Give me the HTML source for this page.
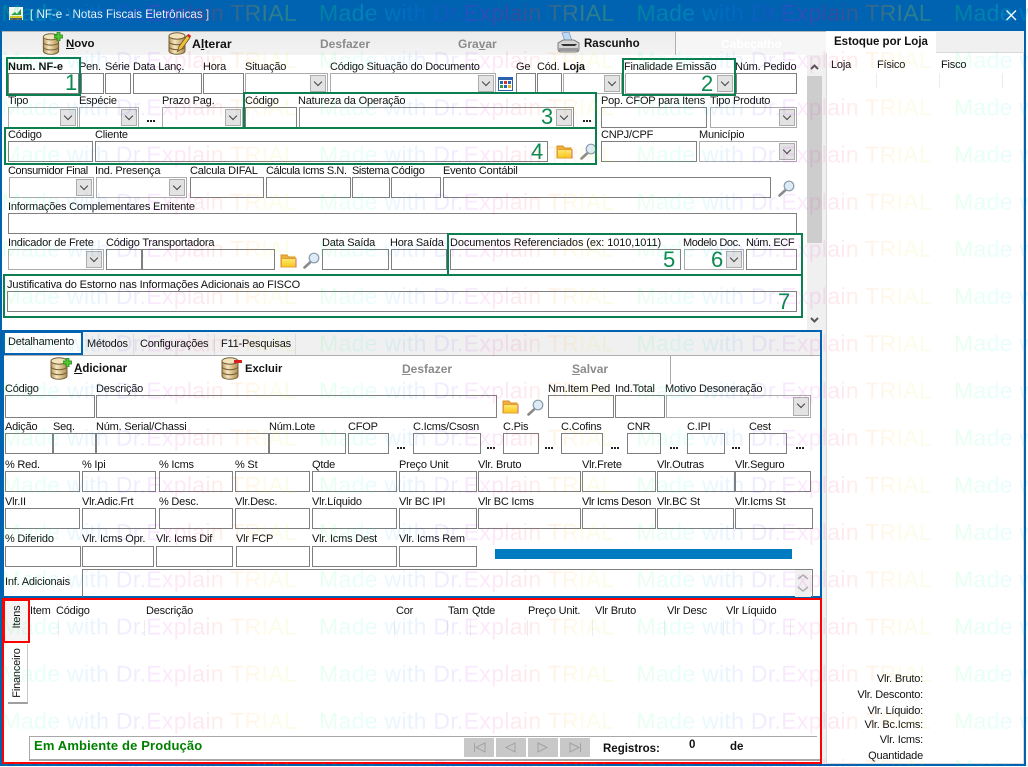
<!DOCTYPE html>
<html lang="pt"><head><meta charset="utf-8"><title>NF-e</title>
<style>
html,body{margin:0;padding:0;width:1028px;height:767px;overflow:hidden;background:#fff}
body{position:relative;font:11px/14px "Liberation Sans",Arial,sans-serif;color:#111;letter-spacing:-.2px}
div,span,b,svg{position:absolute}
.L span{white-space:nowrap;top:0}
.L{left:0;width:826px;height:14px;margin-top:1px}
.r{left:0;width:826px}
.r b{top:0;height:100%;box-sizing:border-box;border:1px solid #7f7f7f;background:transparent}
.r b.c{border-color:#ababab}
.r b.c i{position:absolute;right:1px;top:1px;bottom:1px;width:16px;box-sizing:border-box;background:#e3e3e3;border:1px solid #adadad}
.r b.c i:after{content:"";position:absolute;left:4px;top:3px;width:5px;height:5px;border-right:1px solid #444;border-bottom:1px solid #444;transform:rotate(45deg)}
.d{width:9px;height:2px;background:repeating-linear-gradient(90deg,#222 0 2px,transparent 2px 3px)}
.g{box-sizing:border-box;border:2px solid #0b7f4f}
.n{font-size:22px;line-height:24px;color:#0b8a50;letter-spacing:0}
.t{font-weight:bold;font-size:12px;line-height:16px;white-space:nowrap;color:#111;letter-spacing:0}
.t.o{color:#8b8b8b}
.h{white-space:nowrap;margin-top:1px}
.v{white-space:nowrap;transform:rotate(-90deg);transform-origin:center}
.tk{width:1px;background:#ececec}
.nb{top:738px;width:30px;height:19px;background:#c8c8c8}
.tot{left:780px;width:143px;text-align:right;white-space:nowrap;margin-top:1px}
.q{letter-spacing:-.4px}
</style></head><body>
<!-- window frame -->
<div style="left:0;top:0;width:1026px;height:766px;background:#0063b1"></div>
<div style="left:2px;top:31px;width:1022px;height:733px;background:#f0f0f0"></div>
<!-- toolbar -->
<div style="left:2px;top:32px;width:824px;height:23px;background:linear-gradient(#ececec,#f3f3f3)"></div>
<div style="left:2px;top:31px;width:824px;height:1px;background:#b5b5b5"></div>
<div style="left:675px;top:32px;width:151px;height:23px;background:#f6f6f6;border-left:1px solid #b0b0b0;box-sizing:border-box"></div>
<div class="t" style="left:721px;top:36px;color:#fff">Cabeçalho</div>
<!-- top form -->
<div style="left:2px;top:55px;width:805px;height:275px;background:#fff"></div>
<div style="left:807px;top:55px;width:15px;height:275px;background:#f0f0f0"></div>
<div style="left:807px;top:76px;width:15px;height:167px;background:#cdcdcd"></div>
<svg style="left:807px;top:62px" width="15" height="10"><path d="M4 7l3.500-3.500L11 7" fill="none" stroke="#555" stroke-width="2"/></svg>
<svg style="left:807px;top:315px" width="15" height="10"><path d="M4 3l3.500 3.500L11 3" fill="none" stroke="#555" stroke-width="2"/></svg>
<!-- right panel -->
<div style="left:826px;top:52px;width:198px;height:712px;background:#fff;border:1px solid #d9d9d9;box-sizing:border-box"></div>
<div style="left:826px;top:32px;width:110px;height:21px;background:#fff"></div>
<div class="t" style="left:834px;top:34px;font-size:11.5px">Estoque por Loja</div>
<div class="h" style="left:831px;top:57px">Loja</div><div class="h" style="left:877px;top:57px">Físico</div><div class="h" style="left:941px;top:57px">Fisco</div>
<div class="tk" style="left:876px;top:73px;height:15px"></div><div class="tk" style="left:939px;top:73px;height:15px"></div><div class="tk" style="left:1002px;top:73px;height:15px"></div>
<div class="tot" style="top:671px">Vlr. Bruto:</div><div class="tot" style="top:687px">Vlr. Desconto:</div><div class="tot" style="top:703px">Vlr. Líquido:</div><div class="tot" style="top:717px">Vlr. Bc.Icms:</div><div class="tot" style="top:732px">Vlr. Icms:</div><div class="tot" style="top:748px">Quantidade</div>
<!-- title -->
<svg style="left:9px;top:6px" width="15" height="15"><rect x="0" y="1" width="14" height="13" fill="#f4f4f4"/><path d="M2 9l4-3 2 2 4-5v6z" fill="#2f9a3a"/><path d="M1 10h12v2H1z" fill="#e8c020"/><path d="M1 12h12v2H1z" fill="#556"/></svg>
<div class="h" style="left:30px;top:7px;color:#f0f6fb;font-size:11.6px;letter-spacing:0">[ NF-e - Notas Fiscais Eletrônicas ]</div>
<svg style="left:1005px;top:9px" width="13" height="13"><path d="M1.500 1.500l9.500 9.500M11 1.500L1.500 11" stroke="#fff" stroke-width="1.300"/></svg>
<!-- svg defs -->
<svg width="0" height="0" style="left:0;top:0"><defs>
<linearGradient id="gd" x1="0" x2="1" y1="0" y2="0"><stop offset="0" stop-color="#b8965a"/><stop offset=".35" stop-color="#f6e8c0"/><stop offset="1" stop-color="#b08c4c"/></linearGradient>
<linearGradient id="fo" x1="0" x2="0" y1="0" y2="1"><stop offset="0" stop-color="#ffe873"/><stop offset="1" stop-color="#f8c81c"/></linearGradient>
<symbol id="db" viewBox="0 0 18 23"><path d="M1 4v15c0 1.800 3.500 3.300 8 3.300s8-1.500 8-3.300V4z" fill="url(#gd)" stroke="#75603a"/><ellipse cx="9" cy="4" rx="8" ry="3.200" fill="#f3e4bc" stroke="#75603a"/><path d="M1 9.500c0 1.800 3.500 3.200 8 3.200s8-1.400 8-3.200M1 14.500c0 1.800 3.500 3.200 8 3.200s8-1.400 8-3.200" fill="none" stroke="#75603a"/></symbol>
<symbol id="pl" viewBox="0 0 9 9"><path d="M3 0h3v3h3v3H6v3H3V6H0V3h3z" fill="#52c832" stroke="#1d7a14" stroke-width=".7"/></symbol>
<symbol id="fd" viewBox="0 0 17 15"><path d="M1 2h6l1.500 2H15v10H1z" fill="#f0b040" stroke="#d8902c"/><path d="M1.500 5.500H16V14H1.500z" fill="url(#fo)" stroke="#e0a030"/><path d="M16 6v8.500" stroke="#d040b0" stroke-width=".7"/></symbol>
<symbol id="sr" viewBox="0 0 17 17"><path d="M7 10.500L1.500 15.500" stroke="#8a8a8a" stroke-width="2.600" stroke-linecap="round"/><circle cx="11" cy="6" r="4.800" fill="#dcebf7" stroke="#8a9aa8" stroke-width="1.200"/></symbol>
</defs></svg>
<!-- toolbar items -->
<svg style="left:42px;top:33px" width="18" height="22"><use href="#db"/></svg><svg style="left:54px;top:32px" width="9" height="9"><use href="#pl"/></svg>
<div class="t" style="left:66px;top:36px;font-size:11.4px"><u>N</u>ovo</div>
<svg style="left:168px;top:32px" width="18" height="23"><use href="#db"/></svg>
<svg style="left:176px;top:32px" width="15" height="21"><path d="M1.500 19.500L3 14.500 11 3.500l3 2.200-8 11z" fill="#f0c040" stroke="#6b5320" stroke-width=".8"/><path d="M11 3.500l1.200-1.800 3 2.200-1.200 1.800z" fill="#e02020"/></svg>
<div class="t" style="left:192px;top:36px;font-size:12.3px">A<u>l</u>terar</div>
<div class="t o" style="left:320px;top:36px">Desfazer</div>
<div class="t o" style="left:458px;top:36px">Gra<u>v</u>ar</div>
<svg style="left:557px;top:32px" width="23" height="22"><path d="M5 1l7-1 3 9H8z" fill="#bcd8f4" stroke="#7a9ac0" stroke-width=".8"/><path d="M1 11l5-3h11l5 3v6c0 2-1 3-3 3H4c-2 0-3-1-3-3z" fill="#d4d4d4" stroke="#666" stroke-width=".8"/><path d="M6 14h12l2-2H4z" fill="#333"/><path d="M2 16h19v3H2z" fill="#9a9a9a"/></svg>
<div class="t" style="left:584px;top:36px;font-size:11.5px">Rascunho</div>

<!-- labels top form -->
<div class="L" style="top:59px"><span style="left:8px;font-weight:bold;letter-spacing:0">Num. NF-e</span><span style="left:79px">Pen.</span><span style="left:105px">Série</span><span style="left:133px">Data Lanç.</span><span style="left:203px">Hora</span><span style="left:245px">Situação</span><span style="left:330px">Código Situação do Documento</span><span style="left:516px">Ge</span><span style="left:537px">Cód.</span><span style="left:563px;font-weight:bold">Loja</span><span style="left:624px">Finalidade Emissão</span><span style="left:735px">Núm. Pedido</span></div>
<div class="r" style="top:73px;height:21px"><b style="left:8px;width:71px"></b><b style="left:81px;width:23px"></b><b style="left:105px;width:26px"></b><b style="left:133px;width:69px"></b><b style="left:203px;width:41px"></b><b class="c" style="left:245px;width:83px"><i></i></b><b class="c" style="left:330px;width:166px"><i></i></b><b style="left:516px;width:20px"></b><b style="left:537px;width:25px"></b><b class="c" style="left:563px;width:59px"><i></i></b><b class="c" style="left:625px;width:110px"><i></i></b><b style="left:736px;width:61px"></b></div>
<svg style="left:498px;top:77px" width="15" height="14"><rect x=".5" y=".5" width="14" height="13" fill="#fff" stroke="#2a62b0"/><rect x="1" y="1" width="13" height="2" fill="#2a62b0"/><rect x="2" y="4" width="3" height="3" fill="#2a62b0"/><rect x="6" y="4" width="3" height="3" fill="#d03030"/><rect x="10" y="4" width="3" height="3" fill="#2a62b0"/><rect x="2" y="8" width="3" height="3" fill="#30a040"/><rect x="6" y="8" width="3" height="3" fill="#2a62b0"/><rect x="10" y="8" width="3" height="3" fill="#e0b020"/></svg>

<div class="L" style="top:93px"><span style="left:8px">Tipo</span><span style="left:79px">Espécie</span><span style="left:162px">Prazo Pag.</span><span style="left:245px">Código</span><span style="left:298px">Natureza da Operação</span><span style="left:601px">Pop. CFOP para Itens</span><span style="left:710px">Tipo Produto</span></div>
<div class="r" style="top:107px;height:21px"><b class="c" style="left:8px;width:70px"><i></i></b><b class="c" style="left:79px;width:60px"><i></i></b><b class="c" style="left:162px;width:81px"><i></i></b><b style="left:245px;width:52px"></b><b class="c" style="left:299px;width:275px;border-color:#8f8f8f"><i></i></b><b style="left:601px;width:106px"></b><b class="c" style="left:710px;width:87px"><i></i></b></div>
<div class="d" style="left:147px;top:120px"></div><div class="d" style="left:583px;top:120px"></div>

<div class="L" style="top:127px"><span style="left:8px">Código</span><span style="left:95px">Cliente</span><span style="left:601px">CNPJ/CPF</span><span style="left:699px">Município</span></div>
<div class="r" style="top:141px;height:21px"><b style="left:8px;width:85px"></b><b style="left:95px;width:453px"></b><b style="left:601px;width:96px"></b><b class="c" style="left:699px;width:98px"><i></i></b></div>
<svg style="left:556px;top:144px" width="17" height="15"><use href="#fd"/></svg><svg style="left:580px;top:143px" width="17" height="17"><use href="#sr"/></svg>

<div class="L" style="top:163px"><span class="q" style="left:8px">Consumidor Final</span><span style="left:95px">Ind. Presença</span><span style="left:190px">Calcula DIFAL</span><span class="q" style="left:266px">Cálcula Icms S.N.</span><span class="q" style="left:352px">Sistema</span><span style="left:391px">Código</span><span style="left:443px">Evento Contábil</span></div>
<div class="r" style="top:177px;height:21px"><b class="c" style="left:9px;width:85px"><i></i></b><b class="c" style="left:96px;width:91px"><i></i></b><b style="left:190px;width:74px"></b><b style="left:266px;width:85px"></b><b style="left:352px;width:38px"></b><b style="left:391px;width:50px"></b><b style="left:443px;width:328px"></b></div>
<svg style="left:778px;top:180px" width="17" height="17"><use href="#sr"/></svg>

<div class="L" style="top:199px"><span style="left:8px">Informações Complementares Emitente</span></div>
<div class="r" style="top:213px;height:21px"><b style="left:8px;width:789px"></b></div>

<div class="L" style="top:235px"><span style="left:8px">Indicador de Frete</span><span style="left:106px">Código Transportadora</span><span style="left:322px">Data Saída</span><span style="left:390px">Hora Saída</span><span style="left:450px;letter-spacing:-.1px">Documentos Referenciados (ex: 1010,1011)</span><span class="q" style="left:683px">Modelo Doc.</span><span class="q" style="left:746px">Núm. ECF</span></div>
<div class="r" style="top:249px;height:21px"><b class="c" style="left:8px;width:96px"><i></i></b><b style="left:106px;width:36px"></b><b style="left:142px;width:133px"></b><b style="left:322px;width:67px"></b><b style="left:391px;width:56px"></b><b style="left:450px;width:231px"></b><b class="c" style="left:684px;width:60px"><i></i></b><b style="left:746px;width:51px"></b></div>
<svg style="left:280px;top:253px" width="17" height="15"><use href="#fd"/></svg><svg style="left:303px;top:252px" width="17" height="17"><use href="#sr"/></svg>

<div class="L" style="top:277px"><span style="left:7px;letter-spacing:-.15px">Justificativa do Estorno nas Informações Adicionais ao FISCO</span></div>
<div class="r" style="top:291px;height:21px"><b style="left:7px;width:790px"></b></div>

<!-- green callouts -->
<div class="g" style="left:6px;top:57px;width:75px;height:39px"></div>
<div class="g" style="left:622px;top:58px;width:114px;height:38px"></div>
<div class="g" style="left:243px;top:92px;width:354px;height:37px"></div>
<div class="g" style="left:4px;top:127px;width:593px;height:38px"></div>
<div class="g" style="left:447px;top:233px;width:356px;height:43px"></div>
<div class="g" style="left:3px;top:274px;width:800px;height:44px"></div>
<div class="n" style="left:65px;top:71px">1</div><div class="n" style="left:701px;top:72px">2</div><div class="n" style="left:541px;top:105px">3</div><div class="n" style="left:531px;top:140px">4</div><div class="n" style="left:663px;top:248px">5</div><div class="n" style="left:711px;top:248px">6</div><div class="n" style="left:778px;top:290px">7</div><div class="n" style="left:480px;top:394px">8</div>

<!-- detail section -->
<div style="left:2px;top:330px;width:820px;height:268px;background:#fff;box-sizing:border-box;border:2px solid #0063b1"></div>
<div style="left:4px;top:332px;width:816px;height:23px;background:#f0f0f0"></div>
<div style="left:4px;top:355px;width:816px;height:1px;background:#b0b0b0"></div>
<div style="left:82px;top:334px;width:52px;height:21px;box-sizing:border-box;border-right:1px solid #ddd"></div><div style="left:134px;top:334px;width:81px;height:21px;box-sizing:border-box;border-right:1px solid #ddd"></div><div style="left:215px;top:334px;width:81px;height:21px;box-sizing:border-box;border-right:1px solid #ddd"></div>
<div style="left:3px;top:331px;width:80px;height:24px;background:#fff;box-sizing:border-box;border:2px solid #0063b1"></div>
<div class="h" style="left:8px;top:334px">Detalhamento</div><div class="h" style="left:87px;top:336px">Métodos</div><div class="h" style="left:140px;top:336px">Configurações</div><div class="h" style="left:221px;top:336px">F11-Pesquisas</div>
<div style="left:670px;top:356px;width:1px;height:28px;background:#a8a8a8"></div>
<svg style="left:50px;top:357px" width="18" height="23"><use href="#db"/></svg><svg style="left:63px;top:358px" width="9" height="9"><use href="#pl"/></svg>
<div class="t" style="left:74px;top:361px;font-size:11.5px"><u>A</u>dicionar</div>
<svg style="left:221px;top:357px" width="18" height="23"><use href="#db"/></svg><div style="left:234px;top:360px;width:8px;height:3px;background:#d82020"></div>
<div class="t" style="left:245px;top:361px;font-size:11.2px">Excluir</div>
<div class="t o" style="left:402px;top:361px"><u>D</u>esfazer</div>
<div class="t o" style="left:572px;top:361px"><u>S</u>alvar</div>

<div class="L" style="top:381px"><span style="left:5px">Código</span><span style="left:96px">Descrição</span><span style="left:548px">Nm.Item Ped</span><span style="left:615px">Ind.Total</span><span style="left:665px">Motivo Desoneração</span></div>
<div class="r" style="top:395px;height:23px"><b style="left:5px;width:90px"></b><b style="left:96px;width:401px"></b><b style="left:548px;width:66px"></b><b style="left:615px;width:50px"></b><b class="c" style="left:666px;width:145px"><i></i></b></div>
<svg style="left:502px;top:399px" width="17" height="15"><use href="#fd"/></svg><svg style="left:527px;top:399px" width="17" height="17"><use href="#sr"/></svg>

<div class="L" style="top:419px"><span style="left:5px">Adição</span><span style="left:53px">Seq.</span><span style="left:96px">Núm. Serial/Chassi</span><span style="left:269px">Núm.Lote</span><span style="left:348px">CFOP</span><span style="left:413px">C.Icms/Csosn</span><span style="left:503px">C.Pis</span><span style="left:561px">C.Cofins</span><span style="left:627px">CNR</span><span style="left:687px">C.IPI</span><span style="left:749px">Cest</span></div>
<div class="r" style="top:433px;height:21px"><b style="left:5px;width:48px"></b><b style="left:53px;width:43px"></b><b style="left:96px;width:173px"></b><b style="left:269px;width:77px"></b><b style="left:348px;width:41px"></b><b style="left:413px;width:68px"></b><b style="left:503px;width:36px"></b><b style="left:561px;width:42px"></b><b style="left:627px;width:34px"></b><b style="left:687px;width:38px"></b><b style="left:749px;width:38px"></b></div>
<div class="d" style="left:397px;top:447px"></div><div class="d" style="left:487px;top:447px"></div><div class="d" style="left:545px;top:447px"></div><div class="d" style="left:611px;top:447px"></div><div class="d" style="left:670px;top:447px"></div><div class="d" style="left:732px;top:447px"></div><div class="d" style="left:796px;top:447px"></div>

<div class="L" style="top:457px"><span style="left:5px">% Red.</span><span style="left:82px">% Ipi</span><span style="left:159px">% Icms</span><span style="left:235px">% St</span><span style="left:312px">Qtde</span><span style="left:399px">Preço Unit</span><span style="left:478px">Vlr. Bruto</span><span style="left:582px">Vlr.Frete</span><span style="left:657px">Vlr.Outras</span><span style="left:735px">Vlr.Seguro</span></div>
<div class="r" style="top:471px;height:21px"><b style="left:5px;width:75px"></b><b style="left:82px;width:74px"></b><b style="left:159px;width:74px"></b><b style="left:235px;width:75px"></b><b style="left:312px;width:85px"></b><b style="left:399px;width:78px"></b><b style="left:478px;width:103px"></b><b style="left:582px;width:74px"></b><b style="left:657px;width:78px"></b><b style="left:735px;width:76px"></b></div>

<div class="L" style="top:494px"><span style="left:5px">Vlr.II</span><span style="left:82px">Vlr.Adic.Frt</span><span style="left:159px">% Desc.</span><span style="left:235px">Vlr.Desc.</span><span style="left:312px">Vlr.Líquido</span><span style="left:399px">Vlr BC IPI</span><span style="left:478px">Vlr BC Icms</span><span class="q" style="left:582px">Vlr Icms Deson</span><span style="left:657px">Vlr.BC St</span><span style="left:735px">Vlr.Icms St</span></div>
<div class="r" style="top:508px;height:21px"><b style="left:5px;width:75px"></b><b style="left:82px;width:74px"></b><b style="left:159px;width:74px"></b><b style="left:235px;width:75px"></b><b style="left:312px;width:85px"></b><b style="left:399px;width:78px"></b><b style="left:478px;width:103px"></b><b style="left:582px;width:74px"></b><b style="left:657px;width:77px"></b><b style="left:735px;width:78px"></b></div>

<div class="L" style="top:531px"><span style="left:5px">% Diferido</span><span style="left:82px">Vlr. Icms Opr.</span><span style="left:156px">Vlr. Icms Dif</span><span style="left:236px">Vlr FCP</span><span style="left:312px">Vlr. Icms Dest</span><span style="left:399px">Vlr. Icms Rem</span></div>
<div class="r" style="top:546px;height:21px"><b style="left:5px;width:76px"></b><b style="left:82px;width:72px"></b><b style="left:156px;width:77px"></b><b style="left:236px;width:74px"></b><b style="left:312px;width:85px"></b><b style="left:399px;width:78px"></b></div>
<div style="left:495px;top:549px;width:297px;height:10px;background:#007ac0"></div>
<div class="h" style="left:5px;top:574px">Inf. Adicionais</div>
<div class="r" style="top:569px;height:28px"><b style="left:82px;width:731px;border-bottom:0"></b></div>
<div style="left:795px;top:570px;width:16px;height:27px;background:#f0f0f0"></div>
<svg style="left:795px;top:572px" width="16" height="24"><path d="M3 7l5-4 5 4M3 15l5 4 5-4" fill="none" stroke="#b0b0b0" stroke-width="1.500"/></svg>

<!-- grid section -->
<div style="left:2px;top:598px;width:820px;height:166px;background:#fff;box-sizing:border-box;border:2px solid #f00"></div>
<div style="left:8px;top:644px;width:20px;height:60px;background:#fff;box-sizing:border-box;border-right:1px solid #c8c8c8;border-bottom:2px solid #a0a0a0"></div>
<div style="left:4px;top:600px;width:25px;height:42px;background:#f5f5f5"></div>
<div style="left:3px;top:599px;width:27px;height:44px;box-sizing:border-box;border:2px solid #f00"></div>
<div class="v" style="left:2px;top:610px;width:30px;text-align:center">Itens</div>
<div class="v" style="left:-13px;top:666px;width:60px;text-align:center">Financeiro</div>
<div class="h" style="left:30px;top:603px">Item</div><div class="h" style="left:56px;top:603px">Código</div><div class="h" style="left:146px;top:603px">Descrição</div><div class="h" style="left:396px;top:603px">Cor</div><div class="h" style="left:448px;top:603px">Tam</div><div class="h" style="left:472px;top:603px">Qtde</div><div class="h" style="left:528px;top:603px">Preço Unit.</div><div class="h" style="left:595px;top:603px">Vlr Bruto</div><div class="h" style="left:667px;top:603px">Vlr Desc</div><div class="h" style="left:726px;top:603px">Vlr Líquido</div>
<div class="tk" style="left:58px;top:620px;height:16px"></div><div class="tk" style="left:144px;top:620px;height:16px"></div><div class="tk" style="left:394px;top:620px;height:16px"></div><div class="tk" style="left:447px;top:620px;height:16px"></div><div class="tk" style="left:470px;top:620px;height:16px"></div><div class="tk" style="left:527px;top:620px;height:16px"></div><div class="tk" style="left:592px;top:620px;height:16px"></div><div class="tk" style="left:664px;top:620px;height:16px"></div><div class="tk" style="left:723px;top:620px;height:16px"></div><div class="tk" style="left:790px;top:620px;height:16px"></div>
<div style="left:29px;top:736px;width:788px;height:1px;background:#a8a8a8"></div>
<div style="left:29px;top:736px;width:1px;height:24px;background:#a8a8a8"></div>
<div style="left:29px;top:759px;width:791px;height:2px;background:#a8a8a8"></div>
<div class="t" style="left:34px;top:738px;color:#008000;font-size:13px;letter-spacing:.15px">Em Ambiente de Produção</div>
<div class="nb" style="left:464px"></div><div class="nb" style="left:496px"></div><div class="nb" style="left:528px"></div><div class="nb" style="left:560px"></div>
<svg style="left:464px;top:738px" width="126" height="19"><g fill="none" stroke="#a2a2a2"><path d="M10.500 5v9M21 5l-9 4.500 9 4.500z"/><path d="M42 9.500l9-4.500v9z"/><path d="M74 5l9 4.500-9 4.500z"/><path d="M106 5l9 4.500-9 4.500zM116.500 5v9"/></g></svg>
<div class="t" style="left:603px;top:741px;font-size:11.500px">Registros:</div><div class="t" style="left:689px;top:737px;font-size:11.500px">0</div><div class="t" style="left:730px;top:739px;font-size:11.500px">de</div>

<!-- watermark -->
<svg style="left:0;top:0;width:0;height:0"><defs>
<linearGradient id="wg" gradientUnits="userSpaceOnUse" x1="1" x2="297" y1="0" y2="0"><stop offset="0" stop-color="#00ff50"/><stop offset=".15" stop-color="#00ffd0"/><stop offset=".3" stop-color="#0090ff"/><stop offset=".44" stop-color="#5a30ff"/><stop offset=".54" stop-color="#e000ff"/><stop offset=".68" stop-color="#ff0040"/><stop offset=".8" stop-color="#ff8000"/><stop offset=".9" stop-color="#ffe000"/><stop offset="1" stop-color="#90ff00"/></linearGradient>
<pattern id="wp" patternUnits="userSpaceOnUse" x="0" y="0" width="317.500" height="47.200"><text x="1.500" y="21" font-family="Liberation Sans, Arial, sans-serif" font-size="23" textLength="295" lengthAdjust="spacing" fill="url(#wg)">Made with Dr.Explain TRIAL</text></pattern>
</defs></svg>
<svg style="left:0;top:31px;z-index:20;pointer-events:none;opacity:.085" width="1028" height="736" viewBox="0 31 1028 736"><rect y="31" width="1028" height="736" fill="url(#wp)"/></svg>
<svg style="left:0;top:0;z-index:20;pointer-events:none;opacity:.2" width="1028" height="31" viewBox="0 0 1028 31"><rect width="1028" height="31" fill="url(#wp)"/></svg>
</body></html>
